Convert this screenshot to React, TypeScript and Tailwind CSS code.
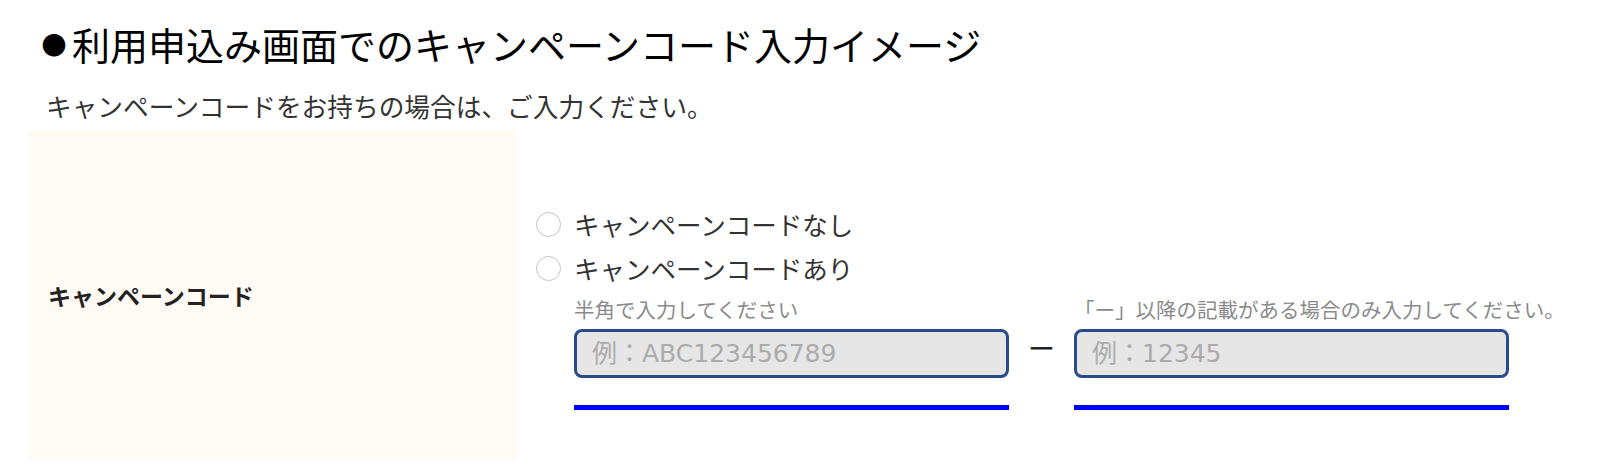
import { useState } from "react";

type Choice = "none" | "has";

const choices: { value: Choice; label: string }[] = [
  { value: "none", label: "キャンペーンコードなし" },
  { value: "has", label: "キャンペーンコードあり" },
];

function CodeField({ placeholder }: { placeholder: string }) {
  return (
    <input
      type="text"
      placeholder={placeholder}
      className="w-[435px] h-[49px] rounded-[8px] border-[3px] border-[#2b4a8c] bg-[#e6e6e6] px-[15px] text-[25px] font-['DejaVu_Sans','Noto_Sans_CJK_JP',sans-serif] text-[#333] placeholder:text-[#ababab] outline-none"
    />
  );
}

export default function App() {
  const [choice, setChoice] = useState<Choice | null>(null);

  return (
    <div className="w-[1602px] h-[472px] overflow-hidden bg-white font-['Noto_Sans_CJK_JP',sans-serif]">
      <h1 className="flex items-center pl-[34px] pt-[25px] text-[38px] leading-[38px] font-normal text-black whitespace-nowrap">
        <span className="inline-block w-[38px] pl-[2px] text-center text-[25px]">●</span>
        利用申込み画面でのキャンペーンコード入力イメージ
      </h1>
      <p className="mt-[30px] pl-[46px] text-[25.7px] leading-[25px] text-[#333] whitespace-nowrap">
        キャンペーンコードをお持ちの場合は、ご入力ください。
      </p>

      <div className="mt-[12px] flex">
        {/* label cell */}
        <div className="ml-[29px] flex h-[330px] w-[487px] items-center bg-[#fffaf4] pl-[19px]">
          <span className="text-[23px] font-bold text-[#222] whitespace-nowrap">
            キャンペーンコード
          </span>
        </div>

        {/* input cell */}
        <div className="pl-[20px] pt-[72px]">
          {choices.map((c) => (
            <label key={c.value} className="flex h-[44px] items-center gap-[13px] cursor-pointer">
              <input
                type="radio"
                name="campaign"
                checked={choice === c.value}
                onChange={() => setChoice(c.value)}
                className="h-[25px] w-[25px] appearance-none rounded-full border-[1.5px] border-[#c4c4c4] bg-white checked:border-[7px] checked:border-[#2b4a8c]"
              />
              <span className="text-[25.5px] text-[#333] whitespace-nowrap">{c.label}</span>
            </label>
          ))}

          <div className="ml-[38px] mt-[4px] grid grid-cols-[435px_65px_435px]">
            <div className="h-[30px] text-[20.5px] leading-[30px] text-[#8a8a8a] whitespace-nowrap">
              半角で入力してください
            </div>
            <div />
            <div className="h-[30px] text-[20.5px] leading-[30px] text-[#8a8a8a] whitespace-nowrap">
              「ー」以降の記載がある場合のみ入力してください。
            </div>

            <div className="mt-[5px]">
              <CodeField placeholder="例：ABC123456789" />
            </div>
            <div className="mt-[5px] flex justify-center pt-[1px] text-[27px] leading-[36px] text-[#222]">
              ー
            </div>
            <div className="mt-[5px]">
              <CodeField placeholder="例：12345" />
            </div>

            <div className="mt-[27px] h-[5px] w-[435px] bg-[#0000ff]" />
            <div />
            <div className="mt-[27px] h-[5px] w-[435px] bg-[#0000ff]" />
          </div>
        </div>
      </div>
    </div>
  );
}
